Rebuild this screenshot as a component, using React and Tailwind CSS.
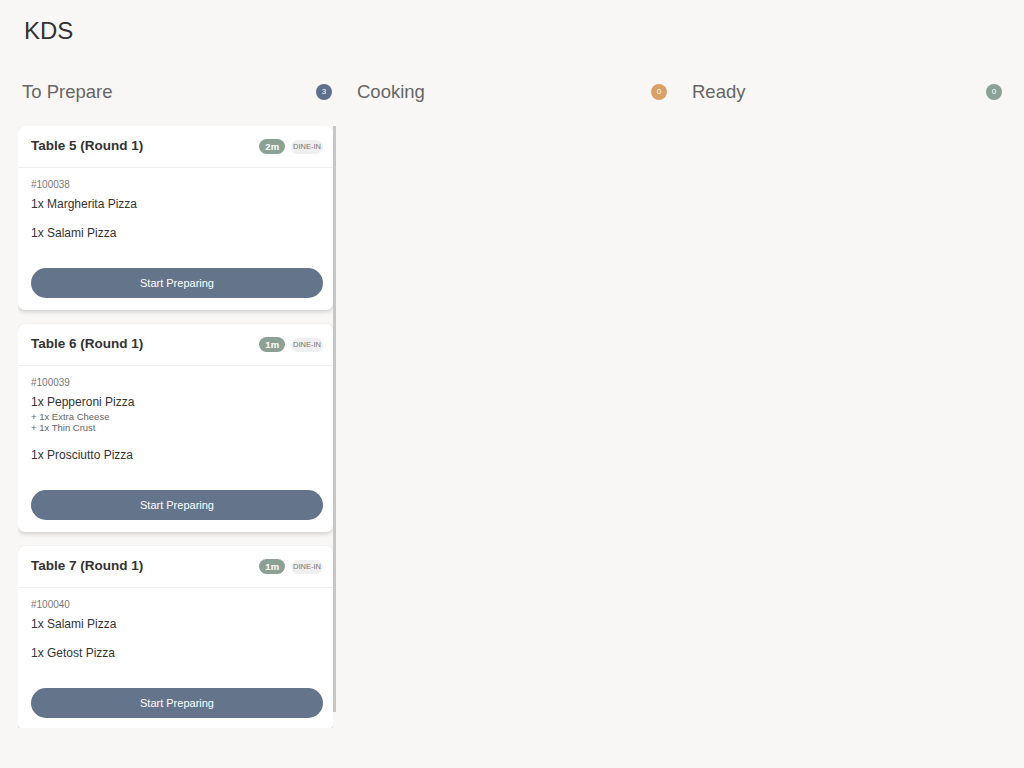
const columns = [
  { id: 'prepare', title: 'To Prepare', count: 3, badge: 'bg-[#5f6f8e]' },
  { id: 'cooking', title: 'Cooking', count: 0, badge: 'bg-[#d9a068]' },
  { id: 'ready', title: 'Ready', count: 0, badge: 'bg-[#8ba196]' },
];

const orders = [
  {
    id: '#100038',
    table: 'Table 5 (Round 1)',
    age: '2m',
    items: [{ name: '1x Margherita Pizza' }, { name: '1x Salami Pizza' }],
  },
  {
    id: '#100039',
    table: 'Table 6 (Round 1)',
    age: '1m',
    items: [
      { name: '1x Pepperoni Pizza', extras: ['+ 1x Extra Cheese', '+ 1x Thin Crust'] },
      { name: '1x Prosciutto Pizza' },
    ],
  },
  {
    id: '#100040',
    table: 'Table 7 (Round 1)',
    age: '1m',
    items: [{ name: '1x Salami Pizza' }, { name: '1x Getost Pizza' }],
  },
];

function OrderCard({ order }) {
  return (
    <div className="bg-white rounded-[7px] shadow-[0_2px_4px_rgba(0,0,0,0.16)] shrink-0">
      <div className="h-[42px] flex items-center justify-between pl-[13px] pr-[10px] border-b border-[#f1f0ee]">
        <h3 className="text-[13.5px] font-bold text-[#333]">{order.table}</h3>
        <div className="flex items-center gap-[6px]">
          <span className="h-[15px] px-[6px] rounded-full bg-[#8ba196] text-white text-[9.5px] font-bold leading-[15px]">
            {order.age}
          </span>
          <span className="h-[14px] px-[2px] rounded-full bg-[#efefef] text-[#777] text-[7.5px] leading-[14px]">
            DINE-IN
          </span>
        </div>
      </div>
      <div className="pl-[13px] pr-[10px] pt-[10px] pb-[12px]">
        <div className="text-[10px] leading-[14px] text-[#777]">{order.id}</div>
        <div className="mt-[4px] flex flex-col gap-[13px]">
          {order.items.map((item) => (
            <div key={item.name}>
              <div className="text-[12px] leading-[16px] text-[#333]">{item.name}</div>
              {item.extras && (
                <div className="py-[1px]">
                  {item.extras.map((x) => (
                    <div key={x} className="text-[9.5px] leading-[11px] text-[#666]">
                      {x}
                    </div>
                  ))}
                </div>
              )}
            </div>
          ))}
        </div>
        <button className="mt-[27px] w-full h-[30px] rounded-full bg-[#64748b] text-white text-[11px]">
          Start Preparing
        </button>
      </div>
    </div>
  );
}

export default function App() {
  return (
    <div
      className="h-screen flex flex-col bg-[#f8f7f5] px-[18px] pb-[40px]"
      style={{ fontFamily: '"Liberation Sans", Arial, sans-serif' }}
    >
      <h1 className="pl-[6px] pt-[15px] text-[24px] leading-[32px] text-[#333]">KDS</h1>

      <div className="mt-[24px] flex-1 min-h-0 grid grid-cols-3 gap-[17px]">
        {columns.map((col) => {
          const hasOrders = col.id === 'prepare';
          return (
            <div key={col.id} className="flex flex-col min-h-0">
              <div className="h-[42px] shrink-0 flex items-center justify-between pl-[4px] pr-[4px]">
                <h2 className="text-[18.5px] text-[#666]">{col.title}</h2>
                <span
                  className={`w-[16px] h-[16px] rounded-full ${col.badge} text-white text-[8px] flex items-center justify-center`}
                >
                  {col.count}
                </span>
              </div>
              <div className="mt-[13px] flex-1 min-h-0 flex">
                <div className="flex-1 min-w-0 overflow-y-auto [scrollbar-width:none] flex flex-col gap-[14px] pb-[13px]">
                  {hasOrders && orders.map((o) => <OrderCard key={o.id} order={o} />)}
                </div>
                {/* thin scroll thumb */}
                {hasOrders && (
                  <div className="w-[3px] shrink-0">
                    <div className="h-[586px] bg-[#c6c6c6]" />
                  </div>
                )}
              </div>
            </div>
          );
        })}
      </div>
    </div>
  );
}
